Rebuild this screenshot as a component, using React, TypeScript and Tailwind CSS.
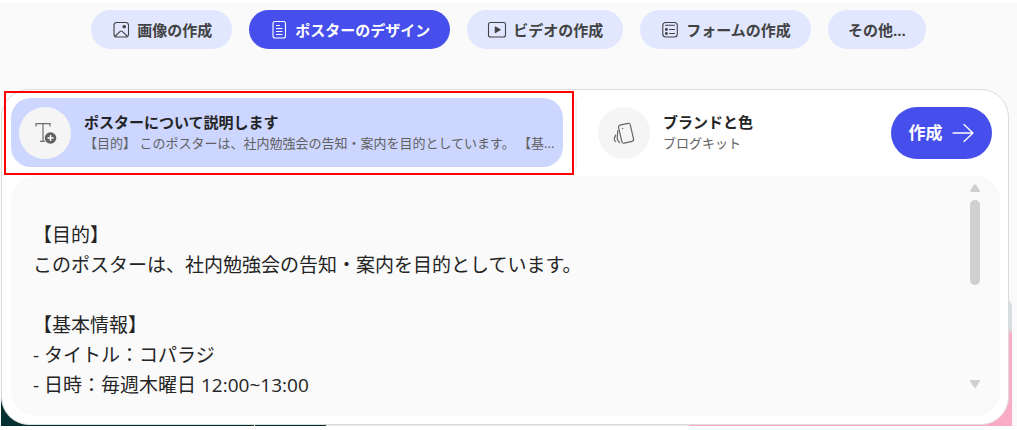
import {useState, type ReactNode} from 'react';

type Tab = {
    label: string;
    icon?: ReactNode;
};

const ImageIcon = () => (
    <svg className="h-5 w-5" viewBox="0 0 20 20" fill="none" stroke="currentColor" strokeWidth="1.1">
        <rect x="3" y="2.5" width="14.5" height="14.5" rx="2.8"/>
        <path d="M4.3 16l4.9-4.6a1.5 1.5 0 0 1 2 0l4.9 4.6"/>
        <circle cx="13.2" cy="6.8" r="1.2" fill="currentColor"/>
    </svg>
);

const PosterIcon = () => (
    <svg className="h-5 w-5" viewBox="0 0 20 20" fill="none" stroke="currentColor" strokeWidth="1.1"
         strokeLinecap="round">
        <rect x="4" y="1.5" width="12.5" height="16.5" rx="2"/>
        <path d="M7.5 5.5h3M7.5 8.5h5.5M7.5 11.5h5.5M7.5 14.5h5.5"/>
    </svg>
);

const VideoIcon = () => (
    <svg className="h-5 w-5" viewBox="0 0 20 20" fill="none" stroke="currentColor" strokeWidth="1.1">
        <rect x="1.5" y="2.5" width="17" height="14.5" rx="2"/>
        <path d="M8.3 7l4.8 2.8-4.8 2.8z" fill="currentColor" strokeLinejoin="round"/>
    </svg>
);

const FormIcon = () => (
    <svg className="h-5 w-5" viewBox="0 0 20 20" fill="none" stroke="currentColor" strokeWidth="1.1"
         strokeLinecap="round">
        <rect x="2.8" y="2.5" width="14.5" height="14.5" rx="3"/>
        <path d="M5.5 5.2h9M9.5 9.5h5M9.5 13.5h5"/>
        <circle cx="6.4" cy="9.5" r="0.9" fill="currentColor"/>
        <circle cx="6.4" cy="13.5" r="0.9" fill="currentColor"/>
    </svg>
);

const TextAddIcon = () => (
    <svg className="h-7 w-7" viewBox="0 0 28 28" fill="none" stroke="#707070" strokeWidth="1.2">
        <path d="M5 7.5V4.6h14v2.9M12 4.6v17.8M9 22.4h5"/>
        <circle cx="19.5" cy="19" r="5.8" fill="#616161" stroke="none"/>
        <path d="M19.5 16v6M16.5 19h6" stroke="#fff" strokeWidth="1.5"/>
    </svg>
);

const BrandIcon = () => (
    <svg className="h-7 w-7" viewBox="0 0 28 28" fill="none" stroke="#666" strokeWidth="1.2" strokeLinecap="round"
         strokeLinejoin="round">
        <rect x="10" y="5" width="12" height="18.5" rx="2" transform="rotate(-13 16 14)"/>
        <circle cx="12.6" cy="9.4" r="0.7" fill="#666" stroke="none"/>
        <path d="M7.8 11.5L7.2 19q0 1.6 1 2.8l1.4 1.8M5.6 16l-1.3 3.8q-.3 1.5 1.3 2.8"/>
    </svg>
);

const ArrowIcon = () => (
    <svg className="h-6 w-6" viewBox="0 0 24 24" fill="none" stroke="currentColor" strokeWidth="1.3"
         strokeLinecap="round" strokeLinejoin="round">
        <path d="M2 12h20M13 3.5l9 8.5-9 8.5"/>
    </svg>
);

const tabs: Tab[] = [
    {label: '画像の作成', icon: <ImageIcon/>},
    {label: 'ポスターのデザイン', icon: <PosterIcon/>},
    {label: 'ビデオの作成', icon: <VideoIcon/>},
    {label: 'フォームの作成', icon: <FormIcon/>},
    {label: 'その他...'},
];

const initialPrompt = `
【目的】
このポスターは、社内勉強会の告知・案内を目的としています。

【基本情報】
- タイトル：コパラジ
- 日時：毎週木曜日 12:00~13:00`;

export default function App() {
    const [activeTab, setActiveTab] = useState(1);
    const [prompt, setPrompt] = useState(initialPrompt);

    return (
        <div className="bg-white pt-[3px] pb-1 font-['Open_Sans','Noto_Sans_CJK_JP',sans-serif]">
            <main className="relative isolate overflow-hidden bg-[#fafafa] pt-[7px] pb-px">
                <nav className="flex justify-center gap-[17px]">
                    {tabs.map((tab, index) => (
                        <button
                            key={tab.label}
                            type="button"
                            onClick={() => setActiveTab(index)}
                            className={`flex h-[39px] items-center gap-1.5 rounded-full px-5 text-[15px] leading-5 font-bold whitespace-nowrap ${
                                index === activeTab ? 'bg-[#464feb] text-white' : 'bg-[#e0e7ff] text-[#424242]'
                            }`}
                        >
                            {tab.icon}
                            {tab.label}
                        </button>
                    ))}
                </nav>

                {/* Template gallery peeking out from behind the card */}
                <div className="absolute right-[5px] bottom-0 left-px -z-10 flex h-[130px] overflow-hidden rounded-t-xl">
                    <div className="w-1/4 bg-[#06302f]"/>
                    <div className="ml-px w-[7%] bg-[#06302f]"/>
                    <div className="w-[36%] bg-[#e8e8e6]"/>
                    <div className="flex-1 bg-linear-to-b from-[#d5dfe2] from-25% to-[#fbaac6] to-30%"/>
                </div>

                <section className="mt-10 mr-2 ml-px rounded-[28px] border border-[#dcdcdc] bg-white p-2 pl-[9px]">
                    <div className="relative flex items-center">
                        <button
                            type="button"
                            className="flex h-[69px] min-w-0 flex-1 items-center gap-[13px] rounded-[20px] bg-[#ccd6ff] pr-1 pl-2 text-left"
                        >
                            <span
                                className="flex h-[52px] w-[52px] shrink-0 items-center justify-center rounded-full bg-[#f5f5f5]">
                                <TextAddIcon/>
                            </span>
                            <span className="min-w-0">
                                <span className="block text-[15px] leading-[21px] font-bold text-[#242424]">
                                    ポスターについて説明します
                                </span>
                                <span className="block truncate text-[13px] leading-5 text-[#616161]">
                                    【目的】 このポスターは、社内勉強会の告知・案内を目的としています。 【基...
                                </span>
                            </span>
                        </button>
                        <div className="ml-3 h-[69px] w-0.5 bg-[#f3f3f3]"/>
                        <button type="button" className="flex w-[314px] items-center gap-[13px] pl-[21px] text-left">
                            <span
                                className="flex h-[52px] w-[52px] shrink-0 items-center justify-center rounded-full bg-[#f5f5f5]">
                                <BrandIcon/>
                            </span>
                            <span>
                                <span className="block text-[15px] leading-[21px] font-bold text-[#242424]">
                                    ブランドと色
                                </span>
                                <span className="block text-[13px] leading-5 text-[#616161]">ブログキット</span>
                            </span>
                        </button>
                        <button
                            type="button"
                            className="mr-2 flex h-[52px] w-[101px] shrink-0 items-center justify-center gap-2 rounded-full bg-[#464feb] text-[17px] leading-6 font-bold text-white"
                        >
                            作成
                            <ArrowIcon/>
                        </button>

                        {/* Highlight around the description field */}
                        <div
                            className="pointer-events-none absolute -top-[7px] right-[426px] -left-[7px] h-[84px] border-2 border-[#ff0000]"/>
                    </div>

                    <div className="mt-[9px] flex h-[240px] rounded-[24px] bg-[#fafafa] pr-5 pl-[22px]">
                        <textarea
                            aria-label="ポスターの説明"
                            rows={7}
                            value={prompt}
                            onChange={(event) => setPrompt(event.target.value)}
                            className="mt-[14px] h-[210px] flex-1 resize-none overflow-hidden bg-transparent text-[19px] leading-[30px] text-[#242424] outline-none"
                        />
                        <div className="flex w-2.5 flex-col items-center pt-2 pb-7">
                            <svg className="h-2 w-2.5" viewBox="0 0 10 8" fill="#d0d0d0">
                                <path d="M4 .8q1-1.2 2 0l3.8 5.6q.5 1.6-1 1.6H1.2q-1.5 0-1-1.6z"/>
                            </svg>
                            <div className="mt-2 h-[85px] w-2.5 rounded-full bg-[#d0d0d0]"/>
                            <svg className="mt-auto h-2 w-2.5" viewBox="0 0 10 8" fill="#d0d0d0">
                                <path d="M4 7.2q1 1.2 2 0l3.8-5.6q.5-1.6-1-1.6H1.2q-1.5 0-1 1.6z"/>
                            </svg>
                        </div>
                    </div>
                </section>
            </main>
        </div>
    );
}
